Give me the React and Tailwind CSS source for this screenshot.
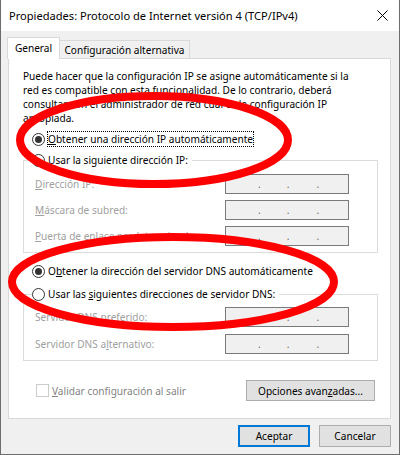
import React from "react";

function Radio({ checked }) {
  return (
    <span className="w-[13px] h-[13px] rounded-full border border-[#333333] bg-white flex items-center justify-center shrink-0">
      {checked && <span className="w-[7px] h-[7px] rounded-full bg-[#333333]" />}
    </span>
  );
}

function IpBox() {
  return (
    <div className="w-[124px] h-[20px] border border-[#7a7a7a] bg-[#f0f0f0] flex items-end pb-[4px] text-[#6d6d6d] leading-none shrink-0">
      <span className="ml-[32px]">.</span>
      <span className="ml-[26px]">.</span>
      <span className="ml-[27px]">.</span>
    </div>
  );
}

function Row({ children, top }) {
  return (
    <div className={"flex items-center justify-between -ml-[8px] pl-[11px] pr-[28px] " + top}>
      <span className="text-[#a0a0a0] whitespace-nowrap">{children}</span>
      <IpBox />
    </div>
  );
}

export default function App() {
  return (
    <div className="relative w-[400px] h-[455px] bg-[#f0f0f0] border-x border-b border-[#6d6d6d] flex flex-col overflow-hidden text-[10.1px] leading-[16px] text-black font-['Noto_Sans','Segoe_UI',sans-serif]">
      {/* Title bar */}
      <div className="h-[31px] bg-white flex items-center justify-between pl-[8px] pr-[11px] shrink-0 text-[11.1px]">
        <span>Propiedades: Protocolo de Internet versión 4 (TCP/IPv4)</span>
        <svg width="11" height="11" viewBox="0 0 11 11">
          <path d="M0.5 0.5 L10.5 10.5 M10.5 0.5 L0.5 10.5" stroke="#000" strokeWidth="1" />
        </svg>
      </div>

      <div className="pl-[6px] pr-[8px] pt-[6px]">
        {/* Tabs */}
        <div className="flex items-end h-[21px] relative z-10">
          <div className="h-[22px] w-[53px] bg-white border border-b-0 border-[#d9d9d9] flex items-center justify-center -mb-[1px] pb-[1px]">
            General
          </div>
          <div className="h-[18px] w-[130px] bg-[#f0f0f0] border border-l-0 border-b-0 border-[#d9d9d9] flex items-center justify-center whitespace-nowrap">
            Configuración alternativa
          </div>
        </div>
        {/* Panel */}
        <div className="ml-[1px] h-[361px] bg-white border border-[#d9d9d9] pl-[14px] pr-[12px] pt-[10px] flex flex-col">
          <p className="leading-[14px] whitespace-nowrap">
            Puede hacer que la configuración IP se asigne automáticamente si la
            <br />
            red es compatible con esta funcionalidad. De lo contrario, deberá
            <br />
            consultar con el administrador de red cuál es la configuración IP
            <br />
            apropiada.
          </p>
          <div className="mt-[6px] ml-[9px] flex items-center h-[16px]">
            <Radio checked />
            <span className="ml-[2px] border border-dotted border-[#000] leading-[14px] whitespace-nowrap">
              <span className="underline">O</span>btener una dirección IP automáticamente
            </span>
          </div>
          <fieldset className="mt-[5px] border border-[#dcdcdc] pl-[8px] pb-[6px]">
            <legend className="flex items-center pr-[4px] h-[16px]">
              <Radio />
              <span className="ml-[3px] whitespace-nowrap">
                <span className="underline">U</span>sar la siguiente dirección IP:
              </span>
            </legend>
            <Row top="mt-[6px]">
              <span className="underline">D</span>irección IP:
            </Row>
            <Row top="mt-[6px]">
              <span className="underline">M</span>áscara de subred:
            </Row>
            <Row top="mt-[6px]">
              <span className="underline">P</span>uerta de enlace predeterminada:
            </Row>
          </fieldset>
          <div className="mt-[10px] ml-[9px] flex items-center h-[16px]">
            <Radio checked />
            <span className="ml-[3px] whitespace-nowrap">
              O<span className="underline">b</span>tener la dirección del servidor DNS automáticamente
            </span>
          </div>
          <fieldset className="mt-[7px] border border-[#dcdcdc] pl-[8px] pb-[6px]">
            <legend className="flex items-center pr-[4px] h-[16px]">
              <Radio />
              <span className="ml-[3px] whitespace-nowrap">
                Usar las <span className="underline">s</span>iguientes direcciones de servidor DNS:
              </span>
            </legend>
            <Row top="mt-[5px]">
              Servidor DNS p<span className="underline">r</span>eferido:
            </Row>
            <Row top="mt-[7px]">
              Servidor DNS a<span className="underline">l</span>ternativo:
            </Row>
          </fieldset>
          <div className="mt-[19px] flex items-center justify-between pl-[13px] pr-[3px]">
            <div className="flex items-center">
              <span className="w-[13px] h-[13px] border border-[#cccccc] bg-white" />
              <span className="ml-[3px] text-[#838383] whitespace-nowrap">
                <span className="underline">V</span>alidar configuración al salir
              </span>
            </div>
            <div className="w-[129px] h-[21px] bg-[#e1e1e1] border border-[#adadad] flex items-center justify-center whitespace-nowrap">
              Opciones avan<span className="underline">z</span>adas...
            </div>
          </div>
        </div>
      </div>

      {/* Buttons */}
      <div className="flex justify-end gap-[9px] pr-[8px] mt-[6px]">
        <div className="w-[72px] h-[22px] bg-[#e1e1e1] border-2 border-[#0078d7] flex items-center justify-center">
          Aceptar
        </div>
        <div className="w-[72px] h-[22px] bg-[#e1e1e1] border border-[#adadad] flex items-center justify-center">
          Cancelar
        </div>
      </div>

      {/* Red annotations */}
      <svg className="absolute inset-0 pointer-events-none" width="400" height="455" viewBox="0 0 400 455">
        <ellipse cx="153" cy="140" rx="134" ry="44" fill="none" stroke="#ff0000" strokeWidth="8" />
        <ellipse cx="172" cy="282" rx="161" ry="45" fill="none" stroke="#ff0000" strokeWidth="8" />
      </svg>
    </div>
  );
}
